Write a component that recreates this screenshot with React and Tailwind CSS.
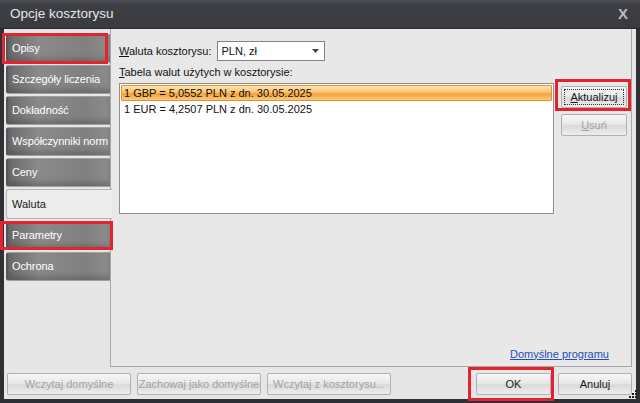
import React from "react";

const tabs = [
  "Opisy",
  "Szczegóły liczenia",
  "Dokładność",
  "Współczynniki norm",
  "Ceny",
  "Waluta",
  "Parametry",
  "Ochrona",
];

function Tab({ label, active }) {
  if (active) {
    return (
      <div className="h-[30px] -mr-[2px] relative z-10 flex items-center pl-[5px] bg-[#ececec] border border-r-0 border-[#b5b5b5] rounded-l-[3px] text-[#1a1a1a]">
        {label}
      </div>
    );
  }
  return (
    <div className="h-[29px] flex items-center pl-[4px] rounded-l-[3px] border-l-[2px] border-y border-[#555] border-y-[#a0a0a0] text-white bg-[linear-gradient(90deg,#6a6a6a_0%,#8a8a8a_30%,#808080_75%,#8c8c8c_100%)] shadow-[inset_0_-4px_5px_rgba(0,0,0,0.18)] whitespace-nowrap tracking-[-0.1px]">
      {label}
    </div>
  );
}

function Btn({ children, disabled, className = "" }) {
  return (
    <div
      className={
        "h-[22px] flex items-center justify-center rounded-[2px] border border-[#b0b0b0] bg-[linear-gradient(180deg,#f6f6f6_0%,#e9e9e9_45%,#d9d9d9_55%,#eeeeee_100%)] whitespace-nowrap " +
        (disabled ? "text-[#a3a3a3] " : "text-[#1a1a1a] ") +
        className
      }
    >
      {children}
    </div>
  );
}

export default function App() {
  return (
    <div className="w-[640px] h-[403px] flex flex-col bg-[#2f3035] text-[11px] font-['Liberation_Sans',Arial,sans-serif] relative overflow-hidden">
      {/* title bar */}
      <div className="h-[29px] shrink-0 flex items-center justify-between px-[10px] bg-[linear-gradient(180deg,#4c4e55_0%,#3d3f45_20%,#393b41_100%)] border-b border-[#2a2b2f]">
        <span className="text-[#e6e6e6] text-[13.5px]">Opcje kosztorysu</span>
        <span className="text-[#b9bcc2] text-[15px] font-bold mr-[2px]">X</span>
      </div>

      {/* body */}
      <div className="flex-1 mx-[4px] mb-[4px] bg-[#e6e6e6] flex flex-col">
        <div className="flex h-[338px]">
          {/* tabs */}
          <div className="w-[106px] shrink-0 pl-[2px] pt-[5px] flex flex-col gap-[2px]">
            {tabs.map((t) => (
              <Tab key={t} label={t} active={t === "Waluta"} />
            ))}
          </div>

          {/* panel */}
          <div className="flex-1 min-w-0 mr-[4px] border-l border-b border-r border-[#a8a8a8] bg-[#e8e8e8] flex flex-col pl-[8px] pr-[4px] pt-[12px] pb-[4px]">
            <div className="flex items-center h-[20px]">
              <span className="text-[#111]">
                <u>W</u>aluta kosztorysu:
              </span>
              <div className="ml-[5px] w-[108px] h-[20px] bg-white border border-[#828282] flex items-center justify-between pl-[4px] pr-[5px] text-[#111]">
                <span>PLN, zł</span>
                <svg width="7" height="4" viewBox="0 0 7 4">
                  <path d="M0 0h7L3.5 4z" fill="#444" />
                </svg>
              </div>
            </div>
            <div className="mt-[1px] text-[#111] h-[20px] flex items-center">
              <span>
                <u>T</u>abela walut użytych w kosztorysie:
              </span>
            </div>
            <div className="flex mt-[1px]">
              <div className="w-[435px] shrink-0 h-[131px] bg-white border border-[#8f8f8f] p-[1px] text-[#111]">
                <div className="h-[16px] flex items-center pl-[2px] border border-[#d8933b] rounded-[1px] bg-[linear-gradient(180deg,#fde3b3_0%,#fbc370_45%,#f6a23a_55%,#fcc978_100%)]">
                  1 GBP = 5,0552 PLN z dn. 30.05.2025
                </div>
                <div className="h-[16px] flex items-center pl-[3px]">
                  1 EUR = 4,2507 PLN z dn. 30.05.2025
                </div>
              </div>
              <div className="ml-[7px] pt-[3px] flex flex-col gap-[6px] w-[66px] shrink-0">
                <Btn className="h-[20px] p-[2px]">
                  <div className="w-full h-full border border-dotted border-[#333] flex items-center justify-center">
                    <span>
                      <u>A</u>ktualizuj
                    </span>
                  </div>
                </Btn>
                <Btn disabled className="h-[22px]">
                  <span>
                    <u>U</u>suń
                  </span>
                </Btn>
              </div>
            </div>
            <div className="flex-1" />
            <div className="flex justify-end pr-[18px]">
              <span className="text-[#1d4fb8] underline">Domyślne programu</span>
            </div>
          </div>
        </div>

        {/* bottom buttons */}
        <div className="flex items-start pt-[6px] pl-[3px] pr-[4px]">
          <Btn disabled className="w-[124px]">Wczytaj domyślne</Btn>
          <Btn disabled className="w-[124px] ml-[6px]">Zachowaj jako domyślne</Btn>
          <Btn disabled className="w-[124px] ml-[6px]">Wczytaj z kosztorysu...</Btn>
          <div className="flex-1" />
          <Btn className="w-[75px]">OK</Btn>
          <Btn className="w-[74px] ml-[7px]">Anuluj</Btn>
        </div>
      </div>

      {/* resize grip */}
      <div className="absolute right-[3px] bottom-[5px] grid grid-cols-3 gap-[1px]">
        <span />
        <span />
        <span className="w-[2px] h-[2px] bg-[#222]" />
        <span />
        <span className="w-[2px] h-[2px] bg-[#222]" />
        <span className="w-[2px] h-[2px] bg-[#222]" />
        <span className="w-[2px] h-[2px] bg-[#222]" />
        <span className="w-[2px] h-[2px] bg-[#222]" />
        <span className="w-[2px] h-[2px] bg-[#222]" />
      </div>

      {/* red annotation frames */}
      <div className="absolute left-[2px] top-[33px] w-[106px] h-[31px] border-[3px] border-[#e3232e]" />
      <div className="absolute left-[0px] top-[221px] w-[113px] h-[29px] border-[3px] border-[#e3232e]" />
      <div className="absolute left-[555px] top-[79px] w-[76px] h-[32px] border-[3px] border-[#e3232e]" />
      <div className="absolute left-[468px] top-[367px] w-[86px] h-[34px] border-[3px] border-[#e3232e]" />
    </div>
  );
}
